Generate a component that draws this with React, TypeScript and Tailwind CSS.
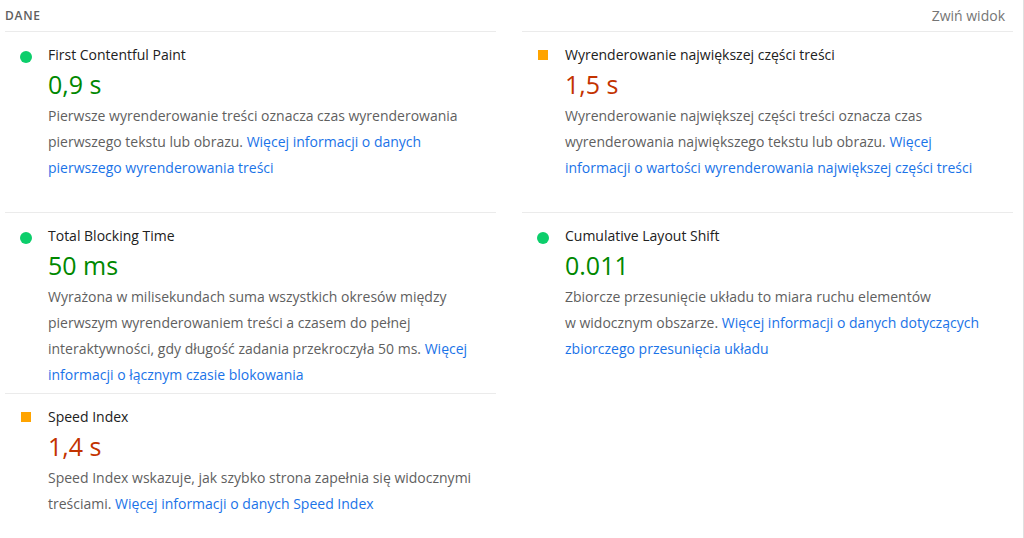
type Rating = "pass" | "average";

interface Metric {
  title: string;
  value: string;
  rating: Rating;
  text: string;
  link: string;
}

const metrics: Metric[] = [
  {
    title: "First Contentful Paint",
    value: "0,9 s",
    rating: "pass",
    text: "Pierwsze wyrenderowanie treści oznacza czas wyrenderowania pierwszego tekstu lub obrazu. ",
    link: "Więcej informacji o danych pierwszego wyrenderowania treści",
  },
  {
    title: "Wyrenderowanie największej części treści",
    value: "1,5 s",
    rating: "average",
    text: "Wyrenderowanie największej części treści oznacza czas wyrenderowania największego tekstu lub obrazu. ",
    link: "Więcej informacji o wartości wyrenderowania największej części treści",
  },
  {
    title: "Total Blocking Time",
    value: "50 ms",
    rating: "pass",
    text: "Wyrażona w milisekundach suma wszystkich okresów między pierwszym wyrenderowaniem treści a czasem do pełnej interaktywności, gdy długość zadania przekroczyła 50 ms. ",
    link: "Więcej informacji o łącznym czasie blokowania",
  },
  {
    title: "Cumulative Layout Shift",
    value: "0.011",
    rating: "pass",
    text: "Zbiorcze przesunięcie układu to miara ruchu elementów w\u00a0widocznym obszarze. ",
    link: "Więcej informacji o danych dotyczących zbiorczego przesunięcia układu",
  },
  {
    title: "Speed Index",
    value: "1,4 s",
    rating: "average",
    text: "Speed Index wskazuje, jak szybko strona zapełnia się widocznymi treściami. ",
    link: "Więcej informacji o danych Speed Index",
  },
];

function Indicator({ rating }: { rating: Rating }) {
  if (rating === "pass") {
    return <span className="mt-[6px] block h-3 w-3 rounded-full bg-[#0cce6b]" />;
  }
  return <span className="ml-px mt-[5px] block h-[10px] w-[10px] bg-[#ffa400]" />;
}

function MetricItem({ metric }: { metric: Metric }) {
  const valueColor = metric.rating === "pass" ? "text-[#008800]" : "text-[#c33300]";
  return (
    <div className="flex min-h-[181px] border-t border-[#ebebeb] pb-1 pl-[15px] pr-[18px] pt-[13px]">
      <div className="w-7 shrink-0">
        <Indicator rating={metric.rating} />
      </div>
      <div className="min-w-0 flex-1">
        <div className="text-[14px] leading-5 text-[#212121]">{metric.title}</div>
        <div className={`text-[25px] leading-[38px] ${valueColor}`}>{metric.value}</div>
        <p className="text-[14px] leading-[26px] text-[#5f5f5f]">
          {metric.text}
          <a href="#" className="text-[#1a73e8]">
            {metric.link}
          </a>
        </p>
      </div>
    </div>
  );
}

export default function App() {
  return (
    <div
      className="h-[538px] overflow-hidden border-r border-[#e0e0e0] bg-white pl-[5px] pr-[10px]"
      style={{ fontFamily: '"Open Sans", "Noto Sans", sans-serif' }}
    >
      <div className="flex h-[31px] items-center justify-between">
        <span className="text-[12px] font-semibold uppercase tracking-[0.06em] text-[#5f5f5f]">Dane</span>
        <button className="pr-[8px] text-[14px] text-[#757575]">Zwiń widok</button>
      </div>
      <div className="grid grid-cols-2 gap-x-[26px]">
        {metrics.map((m) => (
          <MetricItem key={m.title} metric={m} />
        ))}
      </div>
    </div>
  );
}
